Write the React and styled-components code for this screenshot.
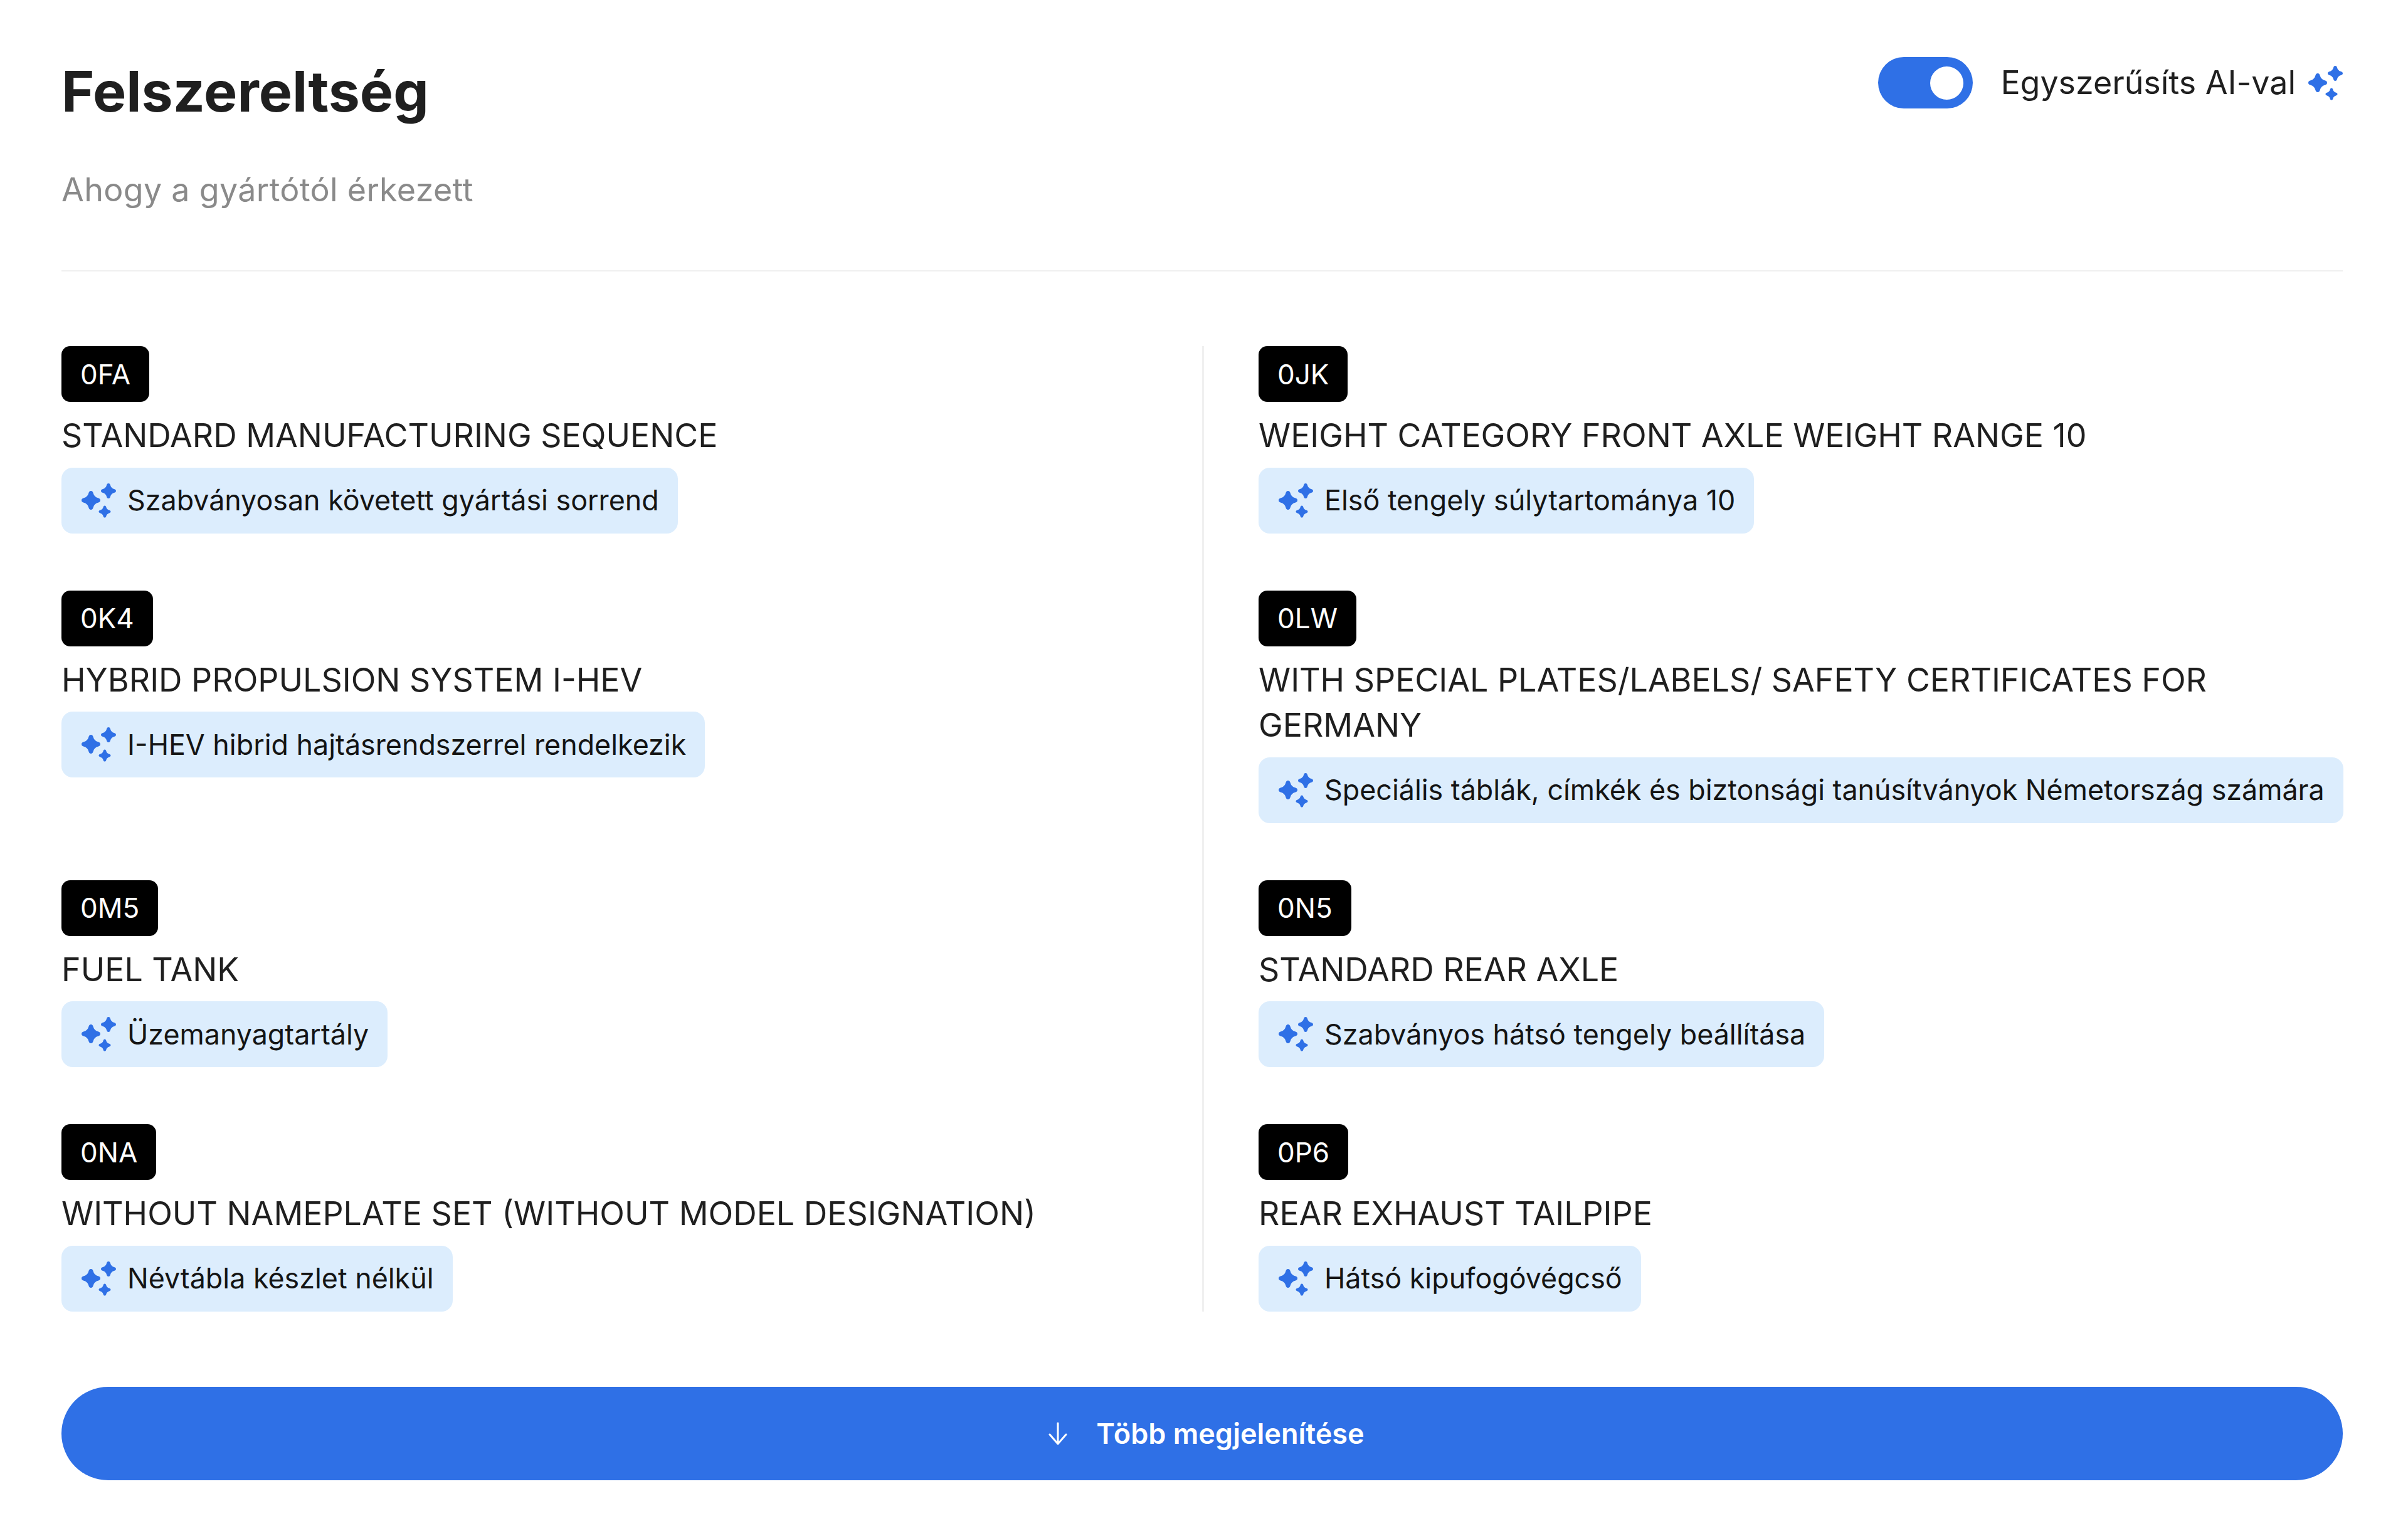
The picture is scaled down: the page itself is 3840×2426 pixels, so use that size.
import React from "react";
import styled, { createGlobalStyle } from "styled-components";

const Global = createGlobalStyle`
  html, body { margin: 0; padding: 0; background: #fff; }
  body { font-family: Inter, "Noto Sans", sans-serif; color: #1f1f1f; }
  * { box-sizing: border-box; }
`;

const Page = styled.main`
  width: 3840px;
  height: 2426px;
  padding: 0 104px 0 98px;
  display: flex;
  flex-direction: column;
`;
const Header = styled.header`
  display: flex;
  justify-content: space-between;
  align-items: flex-start;
  padding-top: 88px;
  height: 433px;
  border-bottom: 2px solid #f0f0f0;
`;
const Title = styled.h1`
  margin: 0;
  font-size: 89.500px;
  line-height: 116px;
  font-weight: 700;
  color: #1f1f1f;
`;
const Subtitle = styled.p`
  margin: 62px 0 0;
  font-size: 52px;
  line-height: 74px;
  letter-spacing: 0.3px;
  font-weight: 400;
  color: #8a8a8a;
`;
const Controls = styled.div`
  display: flex;
  align-items: center;
  margin-top: 3px;
`;
const Switch = styled.div`
  width: 151px;
  height: 82px;
  border-radius: 41px;
  background: #2f70e6;
  display: flex;
  align-items: center;
  justify-content: flex-end;
  padding-right: 15px;
`;
const Knob = styled.span`
  width: 53px;
  height: 53px;
  border-radius: 50%;
  background: #fff;
`;
const ControlLabel = styled.span`
  margin-left: 44px;
  margin-right: 20px;
  font-size: 51.900px;
  line-height: 74px;
  color: #1f1f1f;
`;
const Grid = styled.section`
  display: grid;
  grid-template-columns: minmax(0, 1fr) minmax(0, 1fr);
  grid-auto-rows: auto;
  margin-top: 119px;
`;
const Feature = styled.article`
  padding-bottom: ${(p) => (p.$last ? 0 : 91)}px;
  ${(p) =>
    p.$side === "left"
      ? "padding-right: 88px;"
      : "border-left: 3px solid #f0f0f0; padding-left: 87px;"}
`;
const Code = styled.span`
  display: inline-flex;
  align-items: center;
  height: 89px;
  padding: 0 30px;
  border-radius: 14px;
  background: #000;
  color: #fff;
  font-size: 44px;
  font-weight: 400;
  vertical-align: top;
`;
const Name = styled.div`
  margin-top: 18px;
  font-size: 51.900px;
  line-height: 72.500px;
  color: #1f1f1f;
`;
const Hint = styled.div`
  display: inline-flex;
  align-items: center;
  height: 105px;
  margin-top: 14px;
  padding: 0 30px 0 32px;
  border-radius: 18px;
  background: #dcedfd;
  font-size: 44.800px;
  color: #141414;
  white-space: nowrap;
  vertical-align: top;
`;
const HintText = styled.span`
  margin-left: 18px;
`;
const MoreButton = styled.button`
  margin-top: 120px;
  width: 100%;
  height: 149px;
  border: 0;
  border-radius: 75px;
  padding: 0 0 0 14px;
  background: #2f70e6;
  color: #fff;
  font-family: inherit;
  font-size: 45px;
  font-weight: 600;
  display: flex;
  align-items: center;
  justify-content: center;
  gap: 46px;
`;

const STAR =
  "M0-10C1.400-10 2.100-8.900 2.500-7.500C3.200-4.900 4.900-3.200 7.500-2.500C8.900-2.100 10-1.400 10 0C10 1.400 8.900 2.100 7.500 2.500C4.900 3.200 3.200 4.900 2.500 7.500C2.100 8.900 1.400 10 0 10C-1.400 10-2.100 8.900-2.500 7.500C-3.200 4.900-4.900 3.200-7.500 2.500C-8.900 2.100-10 1.400-10 0C-10-1.400-8.900-2.100-7.500-2.500C-4.900-3.200-3.200-4.900-2.500-7.500C-2.100-8.900-1.400-10 0-10Z";

const Sparkles = () => (
  <svg width="55" height="55" viewBox="0 0 55 55" fill="#2f70e6">
    <path d={STAR} transform="translate(15 27) scale(1.5)" />
    <path d={STAR} transform="translate(43 12) scale(1.2)" />
    <path d={STAR} transform="translate(37 45) scale(0.95)" />
  </svg>
);

const ArrowDown = () => (
  <svg width="30" height="37" viewBox="0 0 30 37" fill="none" stroke="#fff" strokeWidth="3" strokeLinecap="round" strokeLinejoin="round">
    <path d="M15 2v33M2 20l13 15 13-15" />
  </svg>
);

const rows = [
  [
    ["0FA", "STANDARD MANUFACTURING SEQUENCE", "Szabványosan követett gyártási sorrend"],
    ["0JK", "WEIGHT CATEGORY FRONT AXLE WEIGHT RANGE 10", "Első tengely súlytartománya 10"],
  ],
  [
    ["0K4", "HYBRID PROPULSION SYSTEM I-HEV", "I-HEV hibrid hajtásrendszerrel rendelkezik"],
    ["0LW", "WITH SPECIAL PLATES/LABELS/ SAFETY CERTIFICATES FOR GERMANY", "Speciális táblák, címkék és biztonsági tanúsítványok Németország számára"],
  ],
  [
    ["0M5", "FUEL TANK", "Üzemanyagtartály"],
    ["0N5", "STANDARD REAR AXLE", "Szabványos hátsó tengely beállítása"],
  ],
  [
    ["0NA", "WITHOUT NAMEPLATE SET (WITHOUT MODEL DESIGNATION)", "Névtábla készlet nélkül"],
    ["0P6", "REAR EXHAUST TAILPIPE", "Hátsó kipufogóvégcső"],
  ],
];

export default function App() {
  return (
    <Page>
      <Global />
      <Header>
        <div>
          <Title>Felszereltség</Title>
          <Subtitle>Ahogy a gyártótól érkezett</Subtitle>
        </div>
        <Controls>
          <Switch><Knob /></Switch>
          <ControlLabel>Egyszerűsíts AI-val</ControlLabel>
          <Sparkles />
        </Controls>
      </Header>
      <Grid>
        {rows.flatMap((row, r) =>
          row.map(([code, name, hint], c) => (
            <Feature key={code} $side={c === 0 ? "left" : "right"} $last={r === rows.length - 1}>
              <Code>{code}</Code>
              <Name>{name}</Name>
              <Hint>
                <Sparkles />
                <HintText>{hint}</HintText>
              </Hint>
            </Feature>
          ))
        )}
      </Grid>
      <MoreButton>
        <ArrowDown />
        Több megjelenítése
      </MoreButton>
    </Page>
  );
}
